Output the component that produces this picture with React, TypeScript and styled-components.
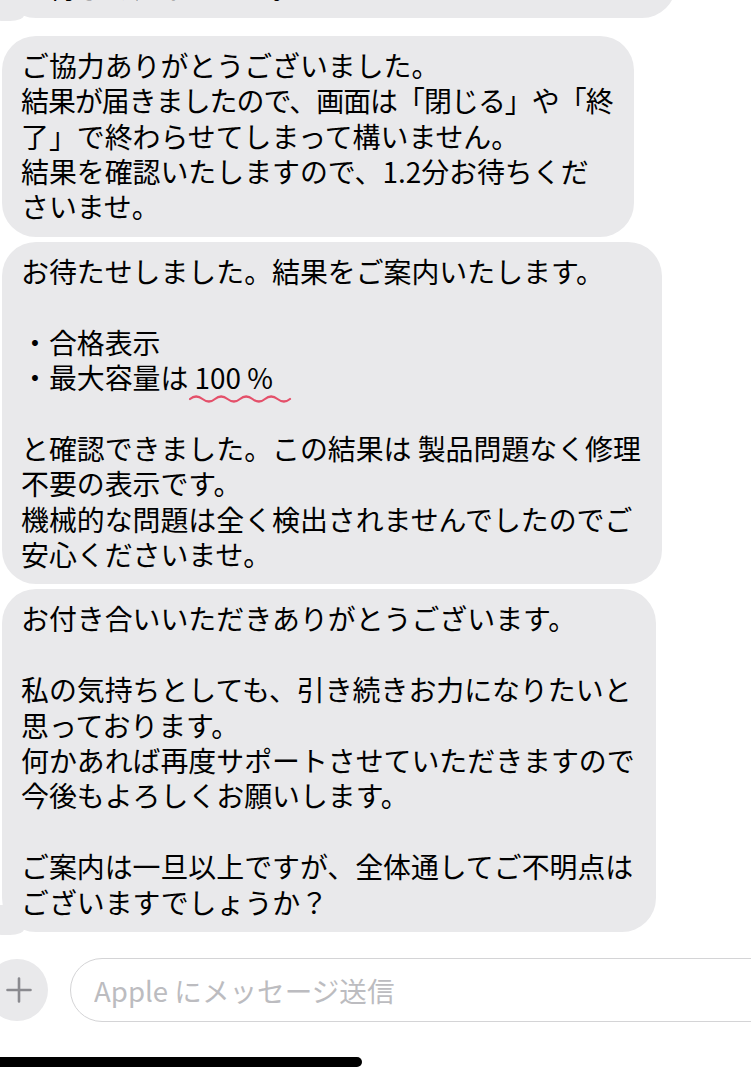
import styled, { createGlobalStyle, css } from 'styled-components';

// ページ全体の基本スタイル
const GlobalStyle = createGlobalStyle`
  html, body {
    margin: 0;
    padding: 0;
    background: #ffffff;
    overflow: hidden;
  }
  body {
    font-family: "Noto Sans CJK JP", "Noto Sans", sans-serif;
    color: #000000;
  }
`;

const BUBBLE_GRAY = '#e9e9eb';

const Screen = styled.div`
  width: 751px;
  height: 1080px;
  display: flex;
  flex-direction: column;
  overflow: hidden;
`;

/* ---------- Thread ---------- */
// 受信メッセージの並び（先頭の吹き出しは画面上端で切れている）
const Thread = styled.div`
  display: flex;
  flex-direction: column;
  align-items: flex-start;
  margin-top: -77px;
`;

const Bubble = styled.div<{ $tail?: boolean; $groupStart?: boolean }>`
  position: relative;
  box-sizing: border-box;
  margin-left: 2px;
  margin-top: ${({ $groupStart }) => ($groupStart ? 18 : 5)}px;
  padding: 12px 21px 12px 19px;
  background: ${BUBBLE_GRAY};
  border-radius: 34px;
  font-size: 27.9px;
  line-height: 35.4px;
  white-space: nowrap;

  &:first-child {
    margin-top: 0;
  }

  ${({ $tail }) =>
    $tail &&
    css`
      &::before {
        content: '';
        position: absolute;
        left: -6px;
        bottom: -3px;
        width: 28px;
        height: 30px;
        background: ${BUBBLE_GRAY};
        border-radius: 0 0 14px 6px / 0 0 6px 6px;
      }
    `}
`;

// テキストは吹き出しの尾より上に描く
const BubbleText = styled.div`
  position: relative;
`;

const Blank = styled.div`
  height: 35.4px;
`;

// 約物を詰めて1行に収めた行（iOSの追い込み相当）
const Tight = styled.div<{ $squeeze: number }>`
  letter-spacing: ${({ $squeeze }) => -$squeeze}px;
`;

// スペルチェックの赤い波線
const Flagged = styled.span`
  position: relative;
`;

const Squiggle = styled.svg`
  position: absolute;
  left: -7px;
  bottom: -6px;
  width: 104px;
  height: 10px;
  overflow: visible;
`;

/* ---------- Composer ---------- */
const Composer = styled.div`
  display: flex;
  align-items: center;
  gap: 22px;
  margin-top: 26px;
  height: 64px;
`;

const AttachButton = styled.button`
  flex: none;
  width: 62px;
  height: 62px;
  margin-left: -14px;
  padding: 0 0 0 4px;
  border: none;
  border-radius: 50%;
  background: #e9e9eb;
  display: flex;
  align-items: center;
  justify-content: center;
`;

const MessageInput = styled.input`
  flex: none;
  box-sizing: border-box;
  width: 720px;
  height: 64px;
  padding: 0 23px;
  border: 1.5px solid #d4d4d6;
  border-radius: 32px;
  background: #ffffff;
  font-family: "Noto Sans CJK JP", "Noto Sans", sans-serif;
  font-size: 27.6px;
  outline: none;

  &::placeholder {
    color: #bcbcc0;
  }
`;

const HomeIndicator = styled.div`
  width: 372px;
  height: 10px;
  margin: 35px 0 0 -10px;
  border-radius: 5px;
  background: #000000;
`;

type Line = string | { text: string; squeeze: number };

function Lines({ lines }: { lines: Line[] }) {
  return (
    <BubbleText>
      {lines.map((line, i) => {
        if (typeof line !== 'string') {
          return (
            <Tight key={i} $squeeze={line.squeeze}>
              {line.text}
            </Tight>
          );
        }
        return line === '' ? <Blank key={i} /> : <div key={i}>{line}</div>;
      })}
    </BubbleText>
  );
}

export default function App() {
  return (
    <>
      <GlobalStyle />
      <Screen>
        <Thread>
          <Bubble $tail>
            <Lines
              lines={[{ text: '診断が完了するまで画面を閉じずにそのままにして', squeeze: 0.25 }, 'お待ちくださいませ。']}
            />
          </Bubble>

          <Bubble $groupStart>
            <Lines
              lines={[
                'ご協力ありがとうございました。',
                { text: '結果が届きましたので、画面は「閉じる」や「終', squeeze: 0.95 },
                '了」で終わらせてしまって構いません。',
                '結果を確認いたしますので、1.2分お待ちくだ',
                'さいませ。',
              ]}
            />
          </Bubble>

          <Bubble>
            <BubbleText>
              <div>お待たせしました。結果をご案内いたします。</div>
              <Blank />
              <div>・合格表示</div>
              <div>
                ・最大容量は{' '}
                <Flagged>
                  100 %
                  <Squiggle viewBox="0 0 104 10">
                    <path
                      d="M2 6 q6 -5 12.5 0 t12.5 0 t12.5 0 t12.5 0 t12.5 0 t12.5 0 t12.5 0 t12.5 0"
                      fill="none"
                      stroke="#e4506a"
                      strokeWidth="2.2"
                      strokeLinecap="round"
                    />
                  </Squiggle>
                </Flagged>
              </div>
              <Blank />
              <div>と確認できました。この結果は 製品問題なく修理</div>
              <div>不要の表示です。</div>
              <div>機械的な問題は全く検出されませんでしたのでご</div>
              <div>安心くださいませ。</div>
            </BubbleText>
          </Bubble>

          <Bubble $tail>
            <Lines
              lines={[
                'お付き合いいただきありがとうございます。',
                '',
                '私の気持ちとしても、引き続きお力になりたいと',
                '思っております。',
                '何かあれば再度サポートさせていただきますので',
                '今後もよろしくお願いします。',
                '',
                'ご案内は一旦以上ですが、全体通してご不明点は',
                'ございますでしょうか？',
              ]}
            />
          </Bubble>
        </Thread>

        <Composer>
          <AttachButton aria-label="添付">
            <svg width="26" height="26" viewBox="0 0 26 26">
              <path d="M13 1.5 V24.5 M1.5 13 H24.5" stroke="#8a8a8f" strokeWidth="2.6" strokeLinecap="round" />
            </svg>
          </AttachButton>
          <MessageInput placeholder="Apple にメッセージ送信" />
        </Composer>

        <HomeIndicator />
      </Screen>
    </>
  );
}
